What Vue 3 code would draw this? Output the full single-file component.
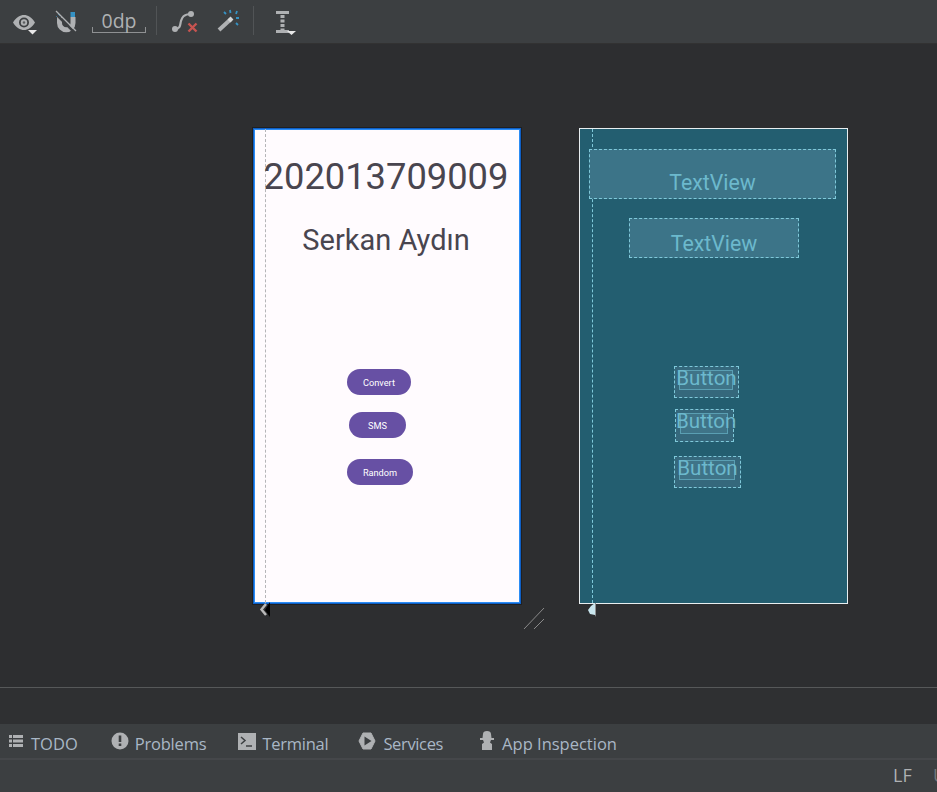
<template>
	<div class="ide">
		<div class="toolbar">
			<svg class="tool-icon eye" width="26" height="26" viewBox="0 0 26 26">
				<path fill="#afb1b3" fill-rule="evenodd" d="M1 12.500C4.500 7 8 5 12 5s7.500 2 11 7.500c-3.500 5.500-7 7.500-11 7.500s-7.500-2-11-7.500zM12 7.500a5 5 0 1 0 0 10 5 5 0 0 0 0-10z" />
				<circle cx="12" cy="12.500" r="3.200" fill="#afb1b3" />
				<circle cx="12" cy="12.500" r="1.200" fill="#5c5f61" />
				<path fill="#e8e8e8" d="M16 20h9l-4.500 4.500z" />
			</svg>
			<svg class="tool-icon magnet" width="24" height="24" viewBox="0 0 24 24">
				<path fill="none" stroke="#afb1b3" stroke-width="5" d="M5.500 7v6a6.750 6.750 0 0 0 13.500 0V7" />
				<rect x="16.500" y="2" width="4.500" height="5" fill="#3592c4" />
				<rect x="2" y="4" width="4" height="3" fill="#3592c4" />
				<path stroke="#3c3f41" stroke-width="2.500" d="M1 3l20 20" />
				<path stroke="#afb1b3" stroke-width="1.300" d="M2 1l20 20" />
			</svg>
			<div class="margin-field">0dp</div>
			<span class="divider first"></span>
			<svg class="tool-icon constraint" width="28" height="26" viewBox="0 0 28 26">
				<path fill="none" stroke="#afb1b3" stroke-width="2.200" d="M5 21c6 0 5-5 6-8s2-7 10-7" />
				<circle cx="5" cy="21" r="3" fill="#afb1b3" />
				<circle cx="21" cy="6" r="3" fill="#afb1b3" />
				<path stroke="#c75450" stroke-width="2.400" d="M18.500 15.500l8 8M26.500 15.500l-8 8" />
			</svg>
			<svg class="tool-icon wand" width="24" height="24" viewBox="0 0 24 24">
				<path stroke="#afb1b3" stroke-width="4" d="M3 21L15 10" />
				<path stroke="#d4d6d8" stroke-width="4" d="M13 12l3-3" />
				<path stroke="#3592c4" stroke-width="1.800" d="M8 3l2 2M14 1l.500 3M21 2l-1 3M23 9h-3M22 16l-2-2" />
			</svg>
			<span class="divider second"></span>
			<svg class="tool-icon baseline" width="24" height="26" viewBox="0 0 24 26">
				<path fill="#afb1b3" d="M1 2h13v3H1zM1 21h13v3H1z" />
				<path stroke="#afb1b3" stroke-width="4" stroke-dasharray="3 1.500" d="M7.500 6v15" />
				<path fill="#e8e8e8" d="M12 22h9l-4.500 4z" />
			</svg>
		</div>

		<div class="canvas">
			<div class="phone design">
				<span class="guide"></span>
				<div class="student-no">202013709009</div>
				<div class="student-name">Serkan Aydın</div>
				<div v-for="b in buttons" :key="b.label" class="pill" :style="boxStyle(b)">{{ b.label }}</div>
			</div>

			<div class="phone blueprint">
				<span class="guide"></span>
				<div class="bp-text first-text">TextView</div>
				<div class="bp-text second-text">TextView</div>
				<div v-for="b in blueprintButtons" :key="b.top" class="bp-button" :style="boxStyle(b)">
					<span class="bp-inner"></span>
					<span class="bp-label">Button</span>
				</div>
			</div>

			<svg class="arrow left" width="14" height="16" viewBox="0 0 14 16">
				<path fill="#000" d="M11 0v15L6 8z" />
				<path fill="none" stroke="#b9b9b9" stroke-width="2.500" d="M7 2L2.500 7.500 7 13" />
			</svg>
			<svg class="arrow right" width="14" height="16" viewBox="0 0 14 16">
				<path fill="#c9e6ee" d="M9 1v12L4 12 2 8l3-4z" />
				<path fill="#8f9193" d="M9 1l1 0v14l-1-2z" />
			</svg>
			<svg class="resize" width="24" height="24" viewBox="0 0 24 24">
				<path stroke="#8a8a8a" d="M1 22L21 1M11 22L21 12" />
			</svg>
		</div>

		<div class="panel-gap"></div>

		<div class="tool-tabs">
			<div class="tab todo">
				<svg width="16" height="14" viewBox="0 0 16 14">
					<path fill="#afb1b3" d="M1 1h3v3H1zM5 1h10v3H5zM1 5.500h3v3H1zM5 5.500h10v3H5zM1 10h3v3H1zM5 10h10v3H5z" />
				</svg>
				<span>TODO</span>
			</div>
			<div class="tab problems">
				<svg width="18" height="18" viewBox="0 0 18 18">
					<circle cx="9" cy="9" r="8.500" fill="#afb1b3" />
					<path fill="#3c3f41" d="M7.700 3.500h2.600v6.500H7.700zM7.700 11.500h2.600V14H7.700z" />
				</svg>
				<span>Problems</span>
			</div>
			<div class="tab terminal">
				<svg width="18" height="17" viewBox="0 0 18 17">
					<rect width="18" height="17" fill="#afb1b3" />
					<path fill="none" stroke="#3c3f41" stroke-width="1.500" d="M3 4l4 3.500L3 11" />
					<path stroke="#3c3f41" stroke-width="1.500" d="M8 13h6" />
				</svg>
				<span>Terminal</span>
			</div>
			<div class="tab services">
				<svg width="18" height="18" viewBox="0 0 18 18">
					<path fill="#afb1b3" stroke="#afb1b3" stroke-linejoin="round" d="M5 1h8l4 8-4 8H5L1 9z" />
					<path fill="#3c3f41" d="M6.500 4.500l7 4.500-7 4.500z" />
				</svg>
				<span>Services</span>
			</div>
			<div class="tab inspection">
				<svg width="16" height="20" viewBox="0 0 16 20">
					<path fill="#afb1b3" d="M4 3c0-2 1.500-3 4-3s4 1 4 3l.500 4H15v2h-3l-1 2.500 2 1.500v6H3v-6l2-1.500L4 9H1V7h2.500z" />
				</svg>
				<span>App Inspection</span>
			</div>
		</div>

		<div class="status-bar">
			<span class="lf">LF</span>
			<span class="utf">UTF-8</span>
		</div>
	</div>
</template>

<script setup>
	const buttons = [
		{ label: "Convert", left: 93, top: 240, width: 64, height: 26 },
		{ label: "SMS", left: 95, top: 283, width: 57, height: 26 },
		{ label: "Random", left: 93, top: 330, width: 66, height: 26 },
	];

	const blueprintButtons = [
		{ left: 94, top: 237, width: 65, height: 32 },
		{ left: 95, top: 280, width: 59, height: 33 },
		{ left: 94, top: 327, width: 67, height: 32 },
	];

	function boxStyle(b) {
		return {
			left: `${b.left}px`,
			top: `${b.top}px`,
			width: `${b.width}px`,
			height: `${b.height}px`,
		};
	}
</script>

<style>
	html,
	body {
		margin: 0;
		background: #2d2e30;
	}
</style>

<style scoped>
	.ide {
		width: 937px;
		height: 792px;
		overflow: hidden;
		display: flex;
		flex-direction: column;
		background: #2d2e30;
		font-family: Roboto, "Noto Sans", sans-serif;
	}

	.toolbar {
		height: 43px;
		flex: none;
		display: flex;
		align-items: flex-start;
		background: #3c3f41;
		border-bottom: 1px solid #323232;
	}

	.tool-icon {
		flex: none;
	}

	.eye {
		margin: 10px 0 0 12px;
	}

	.magnet {
		margin: 10px 0 0 16px;
	}

	.margin-field {
		position: relative;
		flex: none;
		box-sizing: border-box;
		width: 54px;
		height: 22px;
		margin: 11px 0 0 14px;
		text-align: center;
		font: 19.500px/20px "Open Sans", sans-serif;
		color: #afb1b3;
		border-bottom: 1px solid #8f9193;
	}

	.margin-field::before,
	.margin-field::after {
		content: "";
		position: absolute;
		bottom: -1px;
		width: 1px;
		height: 6px;
		background: #8f9193;
	}

	.margin-field::before {
		left: 0;
	}

	.margin-field::after {
		right: 0;
	}

	.divider {
		width: 1px;
		height: 29px;
		flex: none;
		margin-top: 6px;
		background: #515456;
	}

	.divider.first {
		margin-left: 10px;
	}

	.divider.second {
		margin-left: 13px;
	}

	.constraint {
		margin: 8px 0 0 13px;
	}

	.wand {
		margin: 9px 0 0 18px;
	}

	.baseline {
		margin: 9px 0 0 21px;
	}

	.canvas {
		height: 643px;
		flex: none;
		position: relative;
		background: #2d2e30;
		border-bottom: 1px solid #565859;
	}

	.phone {
		position: absolute;
		top: 84px;
		box-sizing: border-box;
		width: 269px;
		height: 476px;
	}

	.design {
		left: 253px;
		width: 268px;
		background: #fffbfe;
		border: 1px solid #0f5fc4;
		box-shadow: 0 0 0 1px #1f2022, inset 0 0 0 1px #2b8cf5;
	}

	.blueprint {
		left: 579px;
		background: #235e70;
		border: 1px solid #e8eef0;
	}

	.guide {
		position: absolute;
		top: 0;
		bottom: 0;
		width: 0;
		border-left: 1px dashed #b5b5b8;
	}

	.design .guide {
		left: 11px;
	}

	.blueprint .guide {
		left: 12px;
		border-left-color: #7fc9da;
	}

	.student-no,
	.student-name {
		position: absolute;
		left: 0;
		right: 2px;
		text-align: center;
		color: #49454f;
		white-space: nowrap;
	}

	.student-no {
		top: 26px;
		font-size: 36.300px;
		line-height: 44px;
	}

	.student-name {
		top: 93px;
		font-size: 29px;
		line-height: 36px;
	}

	.pill {
		position: absolute;
		display: flex;
		align-items: center;
		justify-content: center;
		border-radius: 13px;
		background: #6750a4;
		color: #fff;
		font-size: 9.200px;
		font-weight: 400;
	}

	.bp-text {
		position: absolute;
		box-sizing: border-box;
		background: #3c7488;
		border: 1px dashed #7fc9da;
		color: #6cb9cd;
		font-size: 21.300px;
		text-align: center;
	}

	.first-text {
		left: 9px;
		top: 20px;
		width: 247px;
		height: 50px;
		line-height: 65px;
	}

	.second-text {
		left: 49px;
		top: 89px;
		width: 170px;
		height: 40px;
		line-height: 49px;
	}

	.bp-button {
		position: absolute;
		box-sizing: border-box;
		background: #35687c;
		border: 1px dashed #7fc9da;
	}

	.bp-inner {
		position: absolute;
		left: 4px;
		right: 5px;
		top: 3px;
		bottom: 7px;
		background: #3f7488;
		border: 1px solid #5a9fb3;
	}

	.bp-label {
		position: absolute;
		left: 0;
		right: 0;
		top: -3px;
		text-align: center;
		color: #6cb9cd;
		font-size: 20.500px;
		line-height: 28px;
		white-space: nowrap;
	}

	.arrow {
		position: absolute;
		top: 558px;
	}

	.arrow.left {
		left: 259px;
	}

	.arrow.right {
		left: 586px;
	}

	.resize {
		position: absolute;
		left: 523px;
		top: 563px;
	}

	.panel-gap {
		height: 36px;
		flex: none;
		background: #2f3032;
	}

	.tool-tabs {
		height: 34px;
		flex: none;
		display: flex;
		align-items: center;
		background: #3c3f41;
		border-bottom: 2px solid #45474a;
		color: #a9b7c6;
		font: 16.500px "Open Sans", sans-serif;
	}

	.tab {
		display: flex;
		align-items: center;
		flex: none;
		white-space: nowrap;
	}

	.tab span {
		margin-top: 4px;
	}

	.todo {
		margin-left: 8px;
		gap: 7px;
	}

	.problems {
		margin-left: 33px;
		gap: 6px;
		letter-spacing: -0.200px;
	}

	.terminal {
		margin-left: 32px;
		gap: 6px;
		letter-spacing: -0.250px;
	}

	.services {
		margin-left: 30px;
		gap: 7px;
		letter-spacing: -0.350px;
	}

	.inspection {
		margin-left: 36px;
		gap: 7px;
	}

	.status-bar {
		flex: 1;
		position: relative;
		background: #3c3f41;
		color: #afb1b3;
		font: 18px "Open Sans", sans-serif;
	}

	.lf {
		position: absolute;
		left: 893px;
		top: 3px;
	}

	.utf {
		position: absolute;
		left: 933px;
		top: 3px;
		opacity: 0.5;
	}
</style>
